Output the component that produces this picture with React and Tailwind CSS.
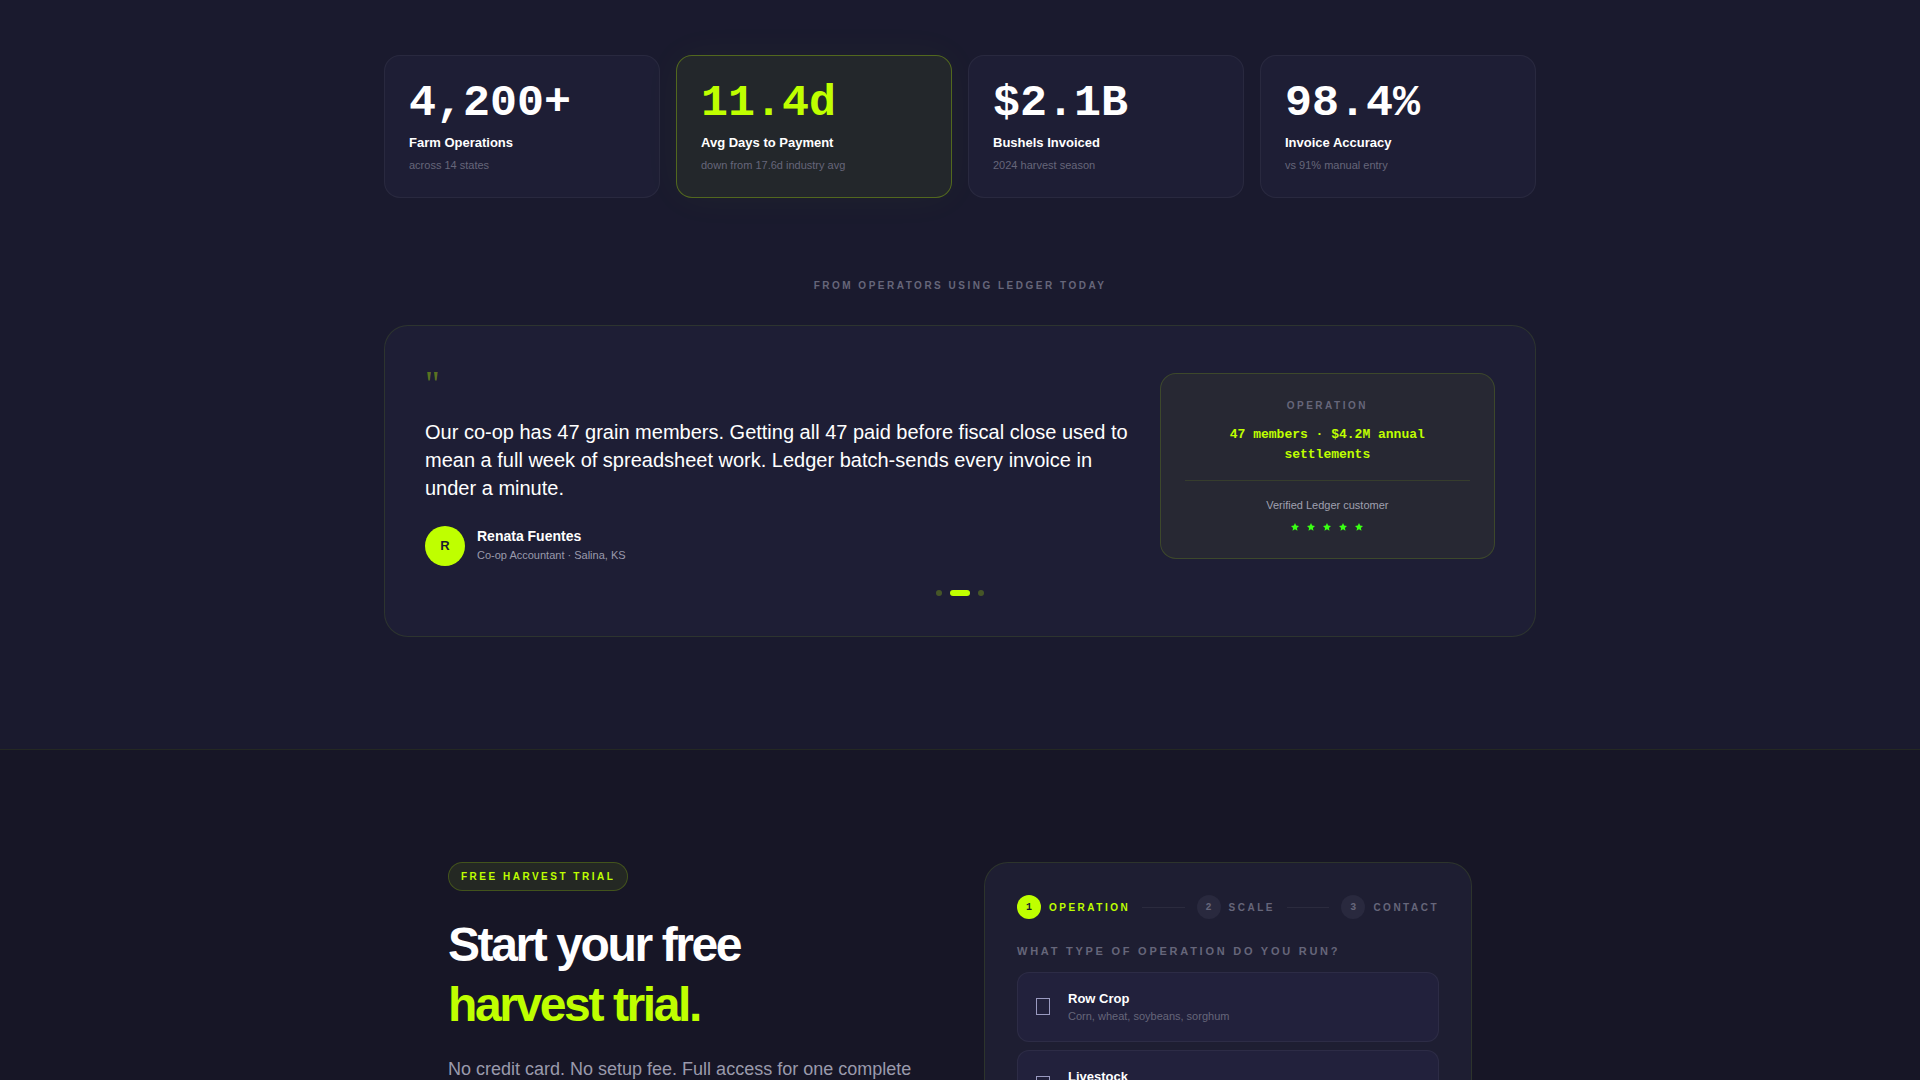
const stats = [
  { value: "4,200+", label: "Farm Operations", note: "across 14 states" },
  { value: "11.4d", label: "Avg Days to Payment", note: "down from 17.6d industry avg", highlight: true },
  { value: "$2.1B", label: "Bushels Invoiced", note: "2024 harvest season" },
  { value: "98.4%", label: "Invoice Accuracy", note: "vs 91% manual entry" },
];

const operations = [
  { name: "Row Crop", detail: "Corn, wheat, soybeans, sorghum" },
  { name: "Livestock", detail: "Cattle, hogs, poultry" },
];

const steps = ["Operation", "Scale", "Contact"];

function StatCard({ value, label, note, highlight }) {
  return (
    <div
      className={
        highlight
          ? "rounded-2xl border border-[#bfff00]/30 bg-[#23272b] p-6 shadow-[0_0_40px_rgba(191,255,0,0.04)]"
          : "rounded-2xl border border-white/5 bg-[#1e1e35] p-6"
      }
    >
      <div
        className={
          highlight
            ? "font-['Liberation_Mono',monospace] text-[45px] leading-[47px] font-bold text-[#bfff00]"
            : "font-['Liberation_Mono',monospace] text-[45px] leading-[47px] font-bold text-white"
        }
      >
        {value}
      </div>
      <div className="mt-1.5 text-[13px] leading-5 font-bold text-white">{label}</div>
      <div className="mt-1 text-[11px] leading-4 text-[#66667a]">{note}</div>
    </div>
  );
}

function Star() {
  return (
    <svg viewBox="0 0 24 24" className="size-2 fill-[#39ff14]" aria-hidden="true">
      <path d="M12 0l3.6 7.8 8.4 1-6.200 5.900L19.400 23 12 18.900 4.600 23l1.600-8.300L0 8.800l8.400-1z" />
    </svg>
  );
}

function Testimonial() {
  return (
    <div className="rounded-3xl border border-[#bfff00]/10 bg-[#1e1e35] p-10">
      <div className="grid grid-cols-3 items-center gap-8">
        <figure className="col-span-2">
          <div className="mb-4 font-['Liberation_Serif',serif] text-4xl leading-9 text-[#bfff00]/40">"</div>
          <blockquote className="text-xl leading-7 text-white">
            Our co-op has 47 grain members. Getting all 47 paid before fiscal close used to mean a full week of
            spreadsheet work. Ledger batch-sends every invoice in under a minute.
          </blockquote>
          <figcaption className="mt-6 flex items-center gap-3">
            <div className="flex size-10 items-center justify-center rounded-full bg-[#bfff00] text-[13px] font-bold text-[#1a1a2e]">
              R
            </div>
            <div className="pb-0.5">
              <div className="text-sm leading-5 font-bold text-white">Renata Fuentes</div>
              <div className="text-[11px] leading-[18px] text-[#9a9aac]">Co-op Accountant · Salina, KS</div>
            </div>
          </figcaption>
        </figure>
        <div className="rounded-2xl border border-[#bfff00]/15 bg-[#272833] p-6 text-center">
          <div className="text-[10px] leading-4 font-bold tracking-[0.25em] text-[#66667a] uppercase">
            Operation
          </div>
          <div className="mt-[11px] font-['Liberation_Mono',monospace] text-[13px] leading-5 font-bold text-[#bfff00]">
            47 members · $4.2M annual settlements
          </div>
          <div className="mt-[15px] border-t border-[#bfff00]/10 pt-4">
            <div className="text-[11px] leading-4 text-[#a0a0b0]">Verified Ledger customer</div>
            <div className="flex justify-center gap-2 pt-2.5 pb-[3px]" role="img" aria-label="5 out of 5 stars">
              <Star />
              <Star />
              <Star />
              <Star />
              <Star />
            </div>
          </div>
        </div>
      </div>
      <div className="mt-6 flex justify-center gap-2">
        <button type="button" aria-label="Testimonial 1" className="size-1.5 rounded-full bg-[#bfff00]/25" />
        <button type="button" aria-label="Testimonial 2" className="h-1.5 w-5 rounded-full bg-[#bfff00]" />
        <button type="button" aria-label="Testimonial 3" className="size-1.5 rounded-full bg-[#bfff00]/25" />
      </div>
    </div>
  );
}

function Step({ number, name, active }) {
  return (
    <li className="flex items-center gap-2">
      <span
        className={
          active
            ? "flex size-6 items-center justify-center rounded-full bg-[#bfff00] font-['Liberation_Mono',monospace] text-[10px] font-bold text-[#1a1a2e]"
            : "flex size-6 items-center justify-center rounded-full bg-[#29293e] font-['Liberation_Mono',monospace] text-[10px] font-bold text-[#66667a]"
        }
      >
        {number}
      </span>
      <span
        className={
          active
            ? "text-[10px] leading-[15px] font-bold tracking-[0.25em] text-[#bfff00] uppercase"
            : "text-[10px] leading-[15px] font-bold tracking-[0.25em] text-[#66667a] uppercase"
        }
      >
        {name}
      </span>
    </li>
  );
}

function TrialForm() {
  return (
    <form className="rounded-3xl border border-[#bfff00]/10 bg-[#1e1e32] p-8">
      <ol className="flex items-center">
        <Step number={1} name={steps[0]} active />
        <li aria-hidden="true" className="mx-3 h-px flex-1 bg-white/6" />
        <Step number={2} name={steps[1]} />
        <li aria-hidden="true" className="mx-3 h-px flex-1 bg-white/6" />
        <Step number={3} name={steps[2]} />
      </ol>
      <p className="mt-6 text-[11px] leading-4 font-bold tracking-[0.25em] text-[#66667a] uppercase">
        What type of operation do you run?
      </p>
      <div className="mt-[13px] flex flex-col gap-2">
        {operations.map((operation) => (
          <button
            key={operation.name}
            type="button"
            className="flex items-center gap-4 rounded-xl border border-white/5 bg-[#22213c] p-4 text-left"
          >
            <span className="flex w-[18px] justify-center pb-0.5">
              <span className="h-[17px] w-[14px] border border-[#9a9ac0]" />
            </span>
            <span className="flex flex-col">
              <span className="text-[13px] leading-[19px] font-bold text-white">{operation.name}</span>
              <span className="text-[11px] leading-[17px] text-[#66667a]">{operation.detail}</span>
            </span>
          </button>
        ))}
      </div>
    </form>
  );
}

export default function App() {
  return (
    <main className="min-h-screen bg-[#1a1a2e] font-['Liberation_Sans',sans-serif]">
      <section className="px-6 pt-[55px] pb-28">
        <div className="mx-auto max-w-6xl">
          <div className="grid grid-cols-4 gap-4">
            {stats.map((stat) => (
              <StatCard key={stat.label} {...stat} />
            ))}
          </div>
          <p className="mt-20 mb-8 text-center text-[10px] leading-[15px] font-bold tracking-[0.25em] text-[#66667a] uppercase">
            From operators using Ledger today
          </p>
          <Testimonial />
        </div>
      </section>
      <section className="border-t border-[#bfff00]/8 bg-[#171626] px-6 py-28">
        <div className="mx-auto grid max-w-5xl grid-cols-2 items-start gap-12">
          <div>
            <span className="inline-block rounded-full border border-[#bfff00]/20 bg-[#bfff00]/8 px-3 py-1.5 text-[10px] leading-[15px] font-bold tracking-[0.25em] text-[#bfff00] uppercase">
              Free Harvest Trial
            </span>
            <h2 className="mt-6 text-5xl leading-[60px] font-bold tracking-tighter text-white">
              Start your free
              <br />
              <span className="text-[#bfff00]">harvest trial.</span>
            </h2>
            <p className="mt-5 text-lg leading-7 text-[#9a9aac]">
              No credit card. No setup fee. Full access for one complete harvest season.
            </p>
          </div>
          <TrialForm />
        </div>
      </section>
    </main>
  );
}
